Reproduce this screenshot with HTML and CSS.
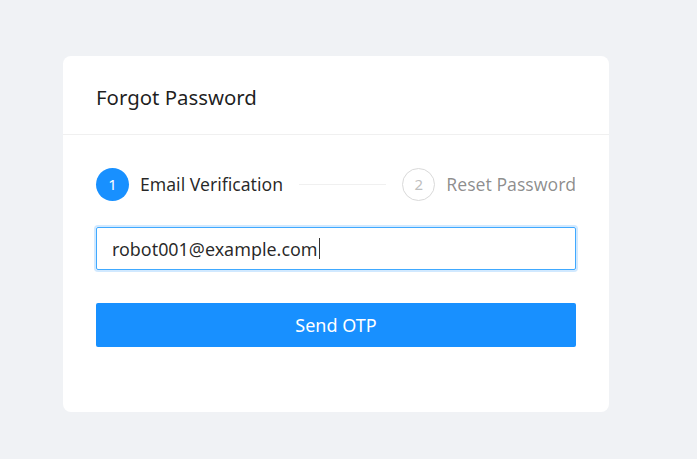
FILE: index.html
```html
<!DOCTYPE html>
<html>
<head>
<meta charset="utf-8">
<link rel="stylesheet" href="styles.css">
</head>
<body>
<div class="page">
  <div class="card">
    <div class="card-head">Forgot Password</div>
    <div class="card-body">
      <div class="steps">
        <div class="step active">
          <span class="step-icon">1</span>
          <span class="step-title">Email Verification</span>
        </div>
        <div class="step-line"></div>
        <div class="step wait">
          <span class="step-icon">2</span>
          <span class="step-title">Reset Password</span>
        </div>
      </div>
      <div class="input-wrap">
        <span class="input-text">robot001@example.com</span><span class="caret"></span>
      </div>
      <button class="btn">Send OTP</button>
    </div>
  </div>
</div>
</body>
</html>
```

FILE: styles.css
```css
* { box-sizing: border-box; }
html, body { margin: 0; padding: 0; }
body {
  background: #f0f2f5;
  font-family: "Noto Sans", "Open Sans", sans-serif;
  width: 697px;
  height: 459px;
  overflow: hidden;
}
.page {
  padding: 56px 0 0 63px;
}
.card {
  width: 546px;
  height: 356px;
  background: #fff;
  border-radius: 8px;
}
.card-head {
  height: 79px;
  padding: 0 33px;
  display: flex;
  align-items: center;
  font-size: 20.4px;
  color: rgba(0,0,0,0.88);
  border-bottom: 1px solid #f0f0f0;
  padding-top: 4px;
}
.card-body {
  padding: 33px 33px 0 33px;
}
.steps {
  display: flex;
  align-items: center;
  height: 32px;
}
.step {
  display: flex;
  align-items: center;
}
.step-icon {
  width: 33px;
  height: 33px;
  border-radius: 50%;
  display: flex;
  align-items: center;
  justify-content: center;
  font-size: 15px;
}
.step.active .step-icon {
  background: #1890ff;
  color: #fff;
}
.step.wait .step-icon {
  border: 1px solid #d9d9d9;
  color: #bfbfbf;
}
.step-title {
  margin-left: 11px;
  font-size: 17.6px;
}
.step.active .step-title { color: rgba(0,0,0,0.85); }
.step.wait .step-title { color: rgba(0,0,0,0.45); }
.step-line {
  flex: 1;
  height: 1px;
  background: #f0f0f0;
  margin: 0 16px;
}
.input-wrap {
  margin-top: 27px;
  height: 43px;
  border: 1px solid #40a9ff;
  border-radius: 2px;
  box-shadow: 0 0 0 2px rgba(24,144,255,0.2);
  display: flex;
  align-items: center;
  padding: 0 15px;
  font-size: 17.9px;
  color: rgba(0,0,0,0.85);
}
.caret {
  display: inline-block;
  width: 1px;
  height: 21px;
  background: #333;
  margin-left: 1px;
}
.btn {
  margin-top: 33px;
  width: 100%;
  height: 44px;
  border: none;
  border-radius: 2px;
  background: #1890ff;
  color: #fff;
  font-family: inherit;
  font-size: 18px;
  padding: 0;
}
```
